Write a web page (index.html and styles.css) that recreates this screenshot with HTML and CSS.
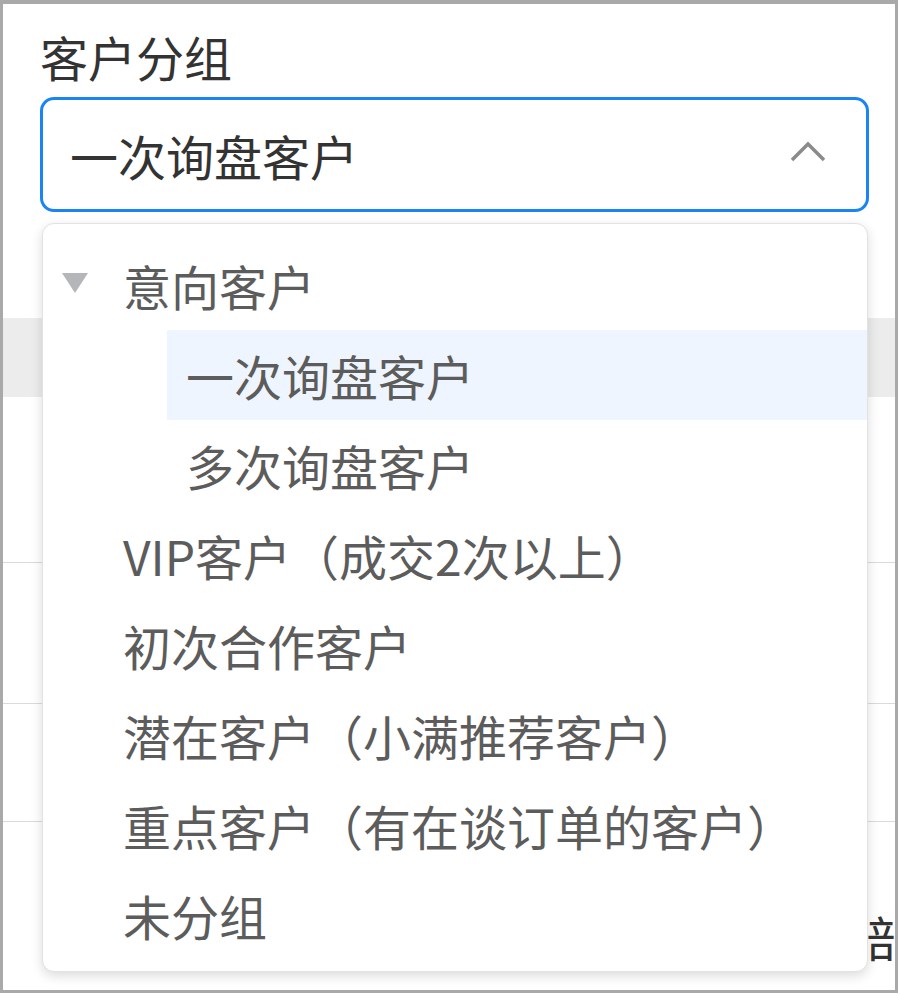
FILE: index.html
```html
<!DOCTYPE html>
<html lang="zh-CN">
<head>
    <meta charset="UTF-8">
    <meta name="viewport" content="width=device-width, initial-scale=1.0">
    <title>客户分组</title>
    <link rel="stylesheet" href="styles.css">
</head>
<body>

    <div class="frame">

        <!-- Form field -->
        <div class="form">
            <label class="field-label">客户分组</label>
            <div class="select-input">
                <span class="select-value">一次询盘客户</span>
                <svg class="select-arrow" width="36" height="22" viewBox="0 0 36 22">
                    <polyline points="2,19 18,3 34,19" fill="none" stroke="#8a8a8a" stroke-width="3.5"/>
                </svg>
            </div>
        </div>

        <!-- Table rows behind the dropdown -->
        <div class="table">
            <div class="table-row row-top"></div>
            <div class="table-row row-hover"></div>
            <div class="table-row row-a"></div>
            <div class="table-row row-b"></div>
            <div class="table-row row-c"></div>
            <div class="table-row row-last">部</div>
        </div>

        <!-- Dropdown tree -->
        <div class="dropdown">
            <div class="tree-node">
                <span class="expand-icon">
                    <svg width="26" height="20" viewBox="0 0 26 20">
                        <polygon points="0,0 26,0 13,20" fill="#b4b6ba"/>
                    </svg>
                </span>
                <span>意向客户</span>
            </div>
            <div class="tree-node child active">一次询盘客户</div>
            <div class="tree-node child">多次询盘客户</div>
            <div class="tree-node leaf">VIP客户（成交2次以上）</div>
            <div class="tree-node leaf">初次合作客户</div>
            <div class="tree-node leaf">潜在客户（小满推荐客户）</div>
            <div class="tree-node leaf">重点客户（有在谈订单的客户）</div>
            <div class="tree-node leaf">未分组</div>
        </div>

    </div>

</body>
</html>
```

FILE: styles.css
```css
* {
    margin: 0;
    padding: 0;
    box-sizing: border-box;
    font-family: "Noto Sans CJK SC", "Liberation Sans", sans-serif;
}

body {
    background: white;
}

.frame {
    position: relative;
    width: 898px;
    height: 993px;
    border: 3px solid #a9a9a9;
    border-top-width: 4px;
    background: white;
    overflow: hidden;
}

/* Form field */
.form {
    padding: 24px 26px 0 37px;
}

.field-label {
    display: block;
    font-size: 48px;
    line-height: 56px;
    color: #333;
    margin-bottom: 13px;
}

.select-input {
    display: flex;
    align-items: center;
    justify-content: space-between;
    height: 115px;
    border: 3px solid #1b84f5;
    border-radius: 14px;
    padding: 0 40px 0 27px;
}

.select-value {
    font-size: 48px;
    color: #333;
}

.select-arrow {
    margin-bottom: 5px;
}

/* Table rows */
.table-row {
    border-bottom: 1px solid #dadada;
}

.row-top { height: 106px; border-bottom: none; }
.row-hover { height: 79px; background: #ececec; border-bottom: none; }
.row-a { height: 166px; }
.row-b { height: 141px; }
.row-c { height: 118px; }

.row-last {
    border-bottom: none;
    padding: 86px 0 0 863px;
    font-size: 48px;
    line-height: 56px;
    color: #333;
    white-space: nowrap;
}

/* Dropdown */
.dropdown {
    position: absolute;
    top: 219px;
    left: 39px;
    width: 826px;
    padding: 16px 0 11px;
    background: white;
    border: 1px solid #e2e2e2;
    border-radius: 12px;
    box-shadow: 0 4px 12px rgba(0, 0, 0, 0.14);
}

.tree-node {
    display: flex;
    align-items: center;
    height: 90px;
    padding-left: 19px;
    font-size: 48px;
    color: #5c5c5c;
    white-space: nowrap;
}

.expand-icon {
    display: flex;
    width: 61px;
    margin-bottom: 4px;
}

.tree-node.leaf {
    padding-left: 80px;
}

.tree-node.child {
    margin-left: 124px;
    padding-left: 19px;
}

.tree-node.active {
    background: #eef5fe;
}
```
